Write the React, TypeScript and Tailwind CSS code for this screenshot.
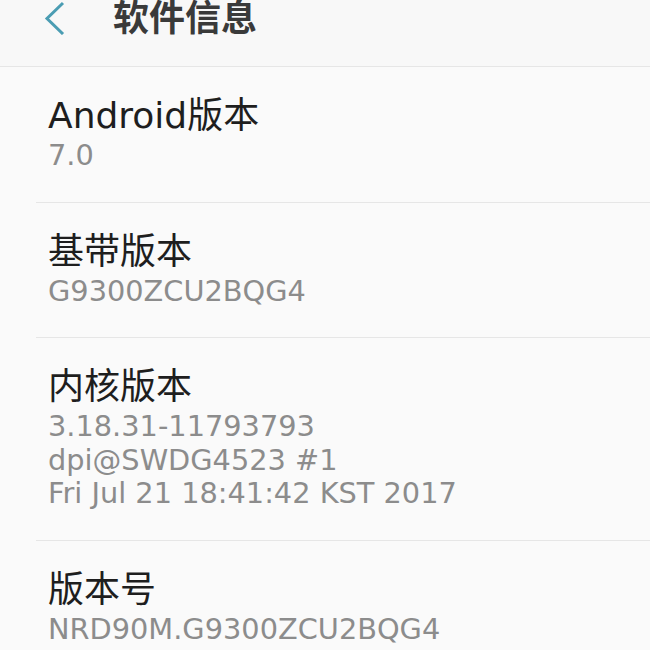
const font = "font-['DejaVu_Sans','Noto_Sans_CJK_SC',sans-serif]"

const ITEMS = [
  { label: 'Android版本', lines: ['7.0'] },
  { label: '基带版本', lines: ['G9300ZCU2BQG4'] },
  { label: '内核版本', lines: ['3.18.31-11793793', 'dpi@SWDG4523 #1', 'Fri Jul 21 18:41:42 KST 2017'] },
  { label: '版本号', lines: ['NRD90M.G9300ZCU2BQG4'] },
]

export default function App() {
  return (
    <div className={`w-[650px] h-[650px] overflow-hidden bg-[#fafafa] ${font}`}>
      {/* Header */}
      <header className="h-[67px] flex items-start border-b border-[#e6e6e6] bg-[#f8f8f8]">
        <svg width="22" height="34" viewBox="0 0 22 34" className="ml-[43px] mt-[1px]">
          <path d="M20 2 L4 17.5 L20 33" fill="none" stroke="#4b9db3" strokeWidth="3" />
        </svg>
        <h1 className="ml-[48px] text-[36px] leading-[38px] font-bold text-[#3a3a3a]">软件信息</h1>
      </header>

      <main>
        {ITEMS.map((item, i) => (
          <div
            key={item.label}
            className={`ml-[36px] pl-[12px] pt-[26px] pb-[29px] ${i < ITEMS.length - 1 ? 'border-b border-[#e6e6e6]' : ''}`}
          >
            <div className="text-[36px] leading-[46px] text-[#1e1e1e]">{item.label}</div>
            {item.lines.map(l => (
              <div key={l} className="text-[28.8px] leading-[33.5px] text-[#8c8c8c]">
                {l}
              </div>
            ))}
          </div>
        ))}
      </main>
    </div>
  )
}
